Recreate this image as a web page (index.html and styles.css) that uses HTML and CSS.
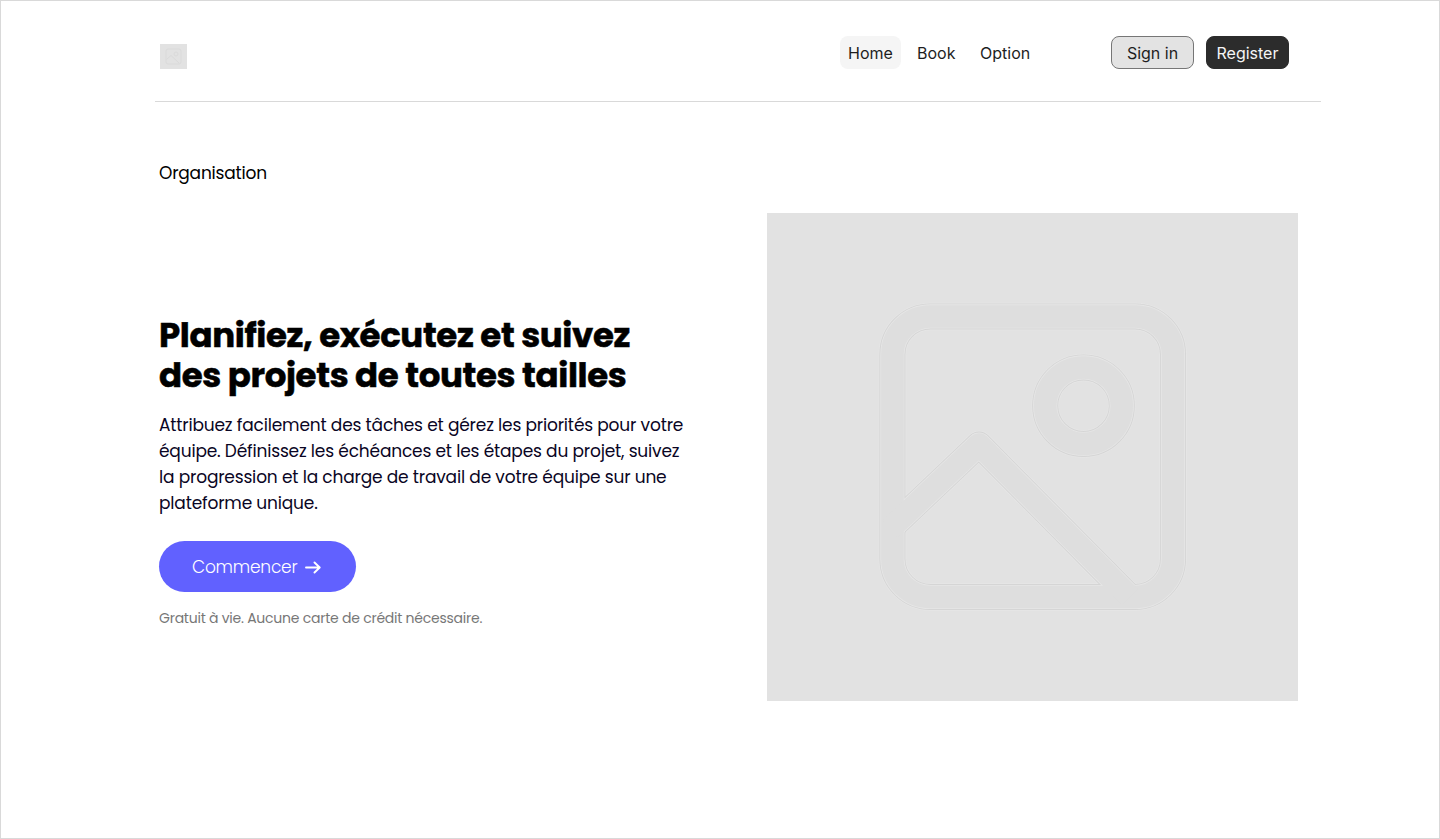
FILE: index.html
```html
<!DOCTYPE html>
<html lang="fr">
<head>
<meta charset="utf-8">
<title>Organisation</title>
<link rel="stylesheet" href="styles.css">
</head>
<body>
<div class="page">
  <header class="header">
    <svg class="logo" width="27" height="25" viewBox="0 0 27 25" fill="none">
      <rect width="27" height="25" fill="#e2e2e2"/>
      <g stroke="#dadada" stroke-width="1"><rect x="6" y="5" width="15" height="15" rx="2"/><circle cx="16" cy="10" r="2"/><path d="M6.500 15.500L11 11.500L19 19"/></g>
    </svg>
    <nav class="nav">
      <a class="link active">Home</a>
      <a class="link book">Book</a>
      <a class="link option">Option</a>
    </nav>
    <div class="actions">
      <button class="btn signin">Sign in</button>
      <button class="btn register">Register</button>
    </div>
  </header>
  <main class="main">
    <section class="copy">
      <p class="eyebrow">Organisation</p>
      <h1 class="title">Planifiez, exécutez et suivez<br>des projets de toutes tailles</h1>
      <p class="text">Attribuez facilement des tâches et gérez les priorités pour votre<br>équipe. Définissez les échéances et les étapes du projet, suivez<br>la progression et la charge de travail de votre équipe sur une<br>plateforme unique.</p>
      <a class="cta"><span class="cta-label">Commencer</span>
        <svg width="16" height="14" viewBox="0 0 16 14" fill="none" stroke="#fff" stroke-width="1.900" stroke-linecap="round" stroke-linejoin="round"><path d="M1 7.500H14.500M9.500 2.500L14.700 7.500L9.500 12.500"/></svg>
      </a>
      <p class="note">Gratuit à vie. Aucune carte de crédit nécessaire.</p>
    </section>
    <svg class="picture" width="531" height="488" viewBox="767 213 531 488" fill="none" stroke-linejoin="round">
      <defs>
        <g id="photo"><rect x="892.400" y="316.400" width="280.600" height="280.600" rx="38"/><circle cx="1083.500" cy="405.700" r="38.300"/><path d="M890 529L979 444.500L1130 597"/></g>
      </defs>
      <rect x="767" y="213" width="531" height="488" fill="#e2e2e2"/>
      <use href="#photo" stroke="#e6e6e6" stroke-width="27.500"/>
      <use href="#photo" stroke="#d5d5d5" stroke-width="26"/>
      <use href="#photo" stroke="#e6e6e6" stroke-width="24.200"/>
      <use href="#photo" stroke="#dedede" stroke-width="22.500"/>
    </svg>
  </main>
</div>
</body>
</html>
```
FILE: styles.css
```css
* { box-sizing: border-box; }
body { margin: 0; background: #fff; }
p, h1 { margin: 0; }
.page { height: 839px; border: 1px solid #d9d9d9; padding: 0 118px 0 154px; overflow: hidden; font-family: Poppins, Inter, sans-serif; color: #000; }
.header { height: 101px; border-bottom: 1px solid #d9d9d9; display: flex; align-items: flex-start; padding: 35px 32px 0 5px; font-family: Inter, sans-serif; }
.logo { display: block; margin-top: 8px; }
.nav { display: flex; margin-left: auto; margin-right: 73px; }
.link { height: 33px; padding: 0 8px; border-radius: 8px; font-size: 16px; line-height: 34px; color: #1e1e1e; white-space: nowrap; }
.active { background: #f5f5f5; width: 61px; }
.book { margin-left: 8px; width: 54px; }
.option { margin-left: 9px; width: 66px; }
.actions { display: flex; gap: 12px; }
.btn { width: 83px; height: 33px; padding: 1px 0 0; border-radius: 8px; font: 16px/30px Inter, sans-serif; border: 1px solid #767676; background: #e3e3e3; color: #1e1e1e; }
.register { background: #2c2c2c; border-color: #2c2c2c; color: #f5f5f5; }
.main { display: flex; justify-content: space-between; padding: 0 23px 0 4px; }
.copy { width: 540px; padding-top: 58px; }
.eyebrow { font-size: 17px; line-height: 26px; letter-spacing: -0.2px; width: max-content; }
.title { margin-top: 129px; font-size: 34px; font-weight: 700; line-height: 40px; letter-spacing: -0.36px; -webkit-text-stroke: 0.5px #000; white-space: nowrap; }
.text { margin-top: 17px; font-size: 17px; line-height: 26px; letter-spacing: -0.175px; color: #0a0524; white-space: nowrap; }
.cta { margin-top: 25px; width: 197px; height: 51px; border-radius: 26px; background: #6161ff; color: #fff; display: flex; align-items: center; padding-left: 33px; gap: 7px; font-size: 17px; font-weight: 300; letter-spacing: -0.2px; }
.cta-label { width: 106px; white-space: nowrap; line-height: 24px; margin-top: 1px; }
.note { margin-top: 15px; font-size: 14px; line-height: 22px; letter-spacing: -0.24px; color: #777; width: max-content; }
.picture { display: block; margin-top: 111px; }
```
